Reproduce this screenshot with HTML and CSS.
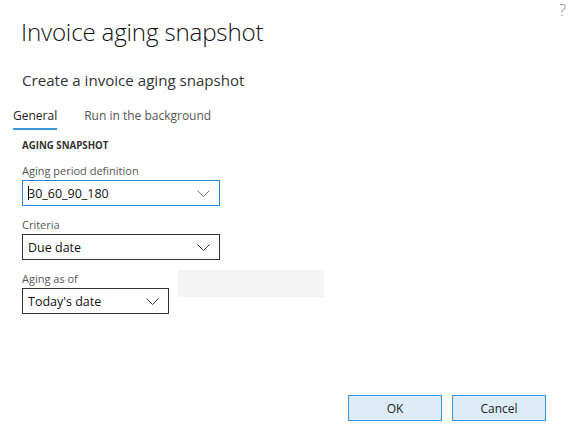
FILE: index.html
```html
<!DOCTYPE html>
<html>
<head>
<meta charset="utf-8">
<link rel="stylesheet" href="styles.css">
</head>
<body>
<div class="dialog">
  <div class="help">?</div>
  <h1 class="title">Invoice aging snapshot</h1>
  <div class="subtitle">Create a invoice aging snapshot</div>
  <div class="tabs">
    <div class="tab active">General</div>
    <div class="tab">Run in the background</div>
  </div>
  <div class="section">AGING SNAPSHOT</div>
  <div class="fields">
    <div class="field">
      <div class="label">Aging period definition</div>
      <div class="select focused wide"><span class="caret"></span><span class="value">30_60_90_180</span>
        <svg class="chev light" viewBox="0 0 13 7" width="13" height="7"><path d="M0.5 0.5 L6.5 6.5 L12.5 0.5" fill="none" stroke-width="1"/></svg>
      </div>
    </div>
    <div class="field">
      <div class="label">Criteria</div>
      <div class="select wide"><span class="value">Due date</span>
        <svg class="chev" viewBox="0 0 13 7" width="13" height="7"><path d="M0.5 0.5 L6.5 6.5 L12.5 0.5" fill="none" stroke-width="1"/></svg>
      </div>
    </div>
    <div class="row">
      <div class="field">
        <div class="label">Aging as of</div>
        <div class="select narrow"><span class="value">Today's date</span>
          <svg class="chev" viewBox="0 0 13 7" width="13" height="7"><path d="M0.5 0.5 L6.5 6.5 L12.5 0.5" fill="none" stroke-width="1"/></svg>
        </div>
      </div>
      <div class="placeholder"></div>
    </div>
  </div>
  <div class="footer">
    <button class="btn">OK</button>
    <button class="btn">Cancel</button>
  </div>
</div>
</body>
</html>
```
FILE: styles.css
```css
html, body {
  margin: 0;
  padding: 0;
  background: #fff;
}
body {
  font-family: "Open Sans", "Noto Sans", "Liberation Sans", sans-serif;
  color: #222;
}
.dialog {
  position: relative;
  width: 574px;
  height: 444px;
  box-sizing: border-box;
  display: flex;
  flex-direction: column;
}
.help {
  position: absolute;
  right: 8px;
  top: 0;
  font-size: 16px;
  line-height: 20px;
  color: #888;
  font-weight: 300;
}
.title {
  margin: 16px 0 0 21px;
  font-size: 24.2px;
  line-height: 32px;
  font-weight: 300;
  color: #111;
  letter-spacing: -0.2px;
}
.subtitle {
  margin: 20px 0 0 22px;
  font-size: 15.1px;
  line-height: 24px;
  color: #333;
}
.tabs {
  display: flex;
  margin: 14px 0 0 13px;
  gap: 27px;
}
.tab {
  font-size: 12px;
  line-height: 20px;
  padding-bottom: 2px;
  border-bottom: 2px solid transparent;
  color: #555;
}
.tab.active {
  color: #222;
  border-bottom-color: #3a96dd;
}
.section {
  margin: 9px 0 0 22px;
  font-size: 9.7px;
  line-height: 14px;
  font-weight: 700;
  color: #333;
}
.fields {
  display: flex;
  flex-direction: column;
  gap: 11px;
  margin: 10px 0 0 22px;
}
.field {
  display: flex;
  flex-direction: column;
  gap: 1px;
}
.label {
  font-size: 11px;
  line-height: 16px;
  color: #555;
}
.select {
  box-sizing: border-box;
  height: 26px;
  border: 1px solid #333;
  display: flex;
  align-items: center;
  padding-left: 5px;
  padding-right: 9px;
}
.select.focused {
  border-color: #2b88d8;
}
.select.wide {
  width: 198px;
}
.select.narrow {
  width: 147px;
}
.value {
  flex: 1;
  font-size: 12.5px;
  color: #111;
}
.caret {
  width: 1px;
  height: 14px;
  background: #000;
  margin-right: -1px;
}
.chev path {
  stroke: #333;
}
.chev.light path {
  stroke: #777;
}
.row {
  display: flex;
  align-items: flex-start;
  gap: 9px;
}
.placeholder {
  width: 146px;
  height: 27px;
  margin-top: -1px;
  background: #f4f4f4;
}
.footer {
  margin-top: auto;
  display: flex;
  justify-content: flex-end;
  gap: 10px;
  padding: 0 28px 23px 0;
}
.btn {
  box-sizing: border-box;
  width: 94px;
  height: 26px;
  border: 1px solid #3a96dd;
  background: #deecf9;
  font-family: "Open Sans", "Noto Sans", "Liberation Sans", sans-serif;
  font-size: 12px;
  color: #222;
  padding: 0;
}
```
